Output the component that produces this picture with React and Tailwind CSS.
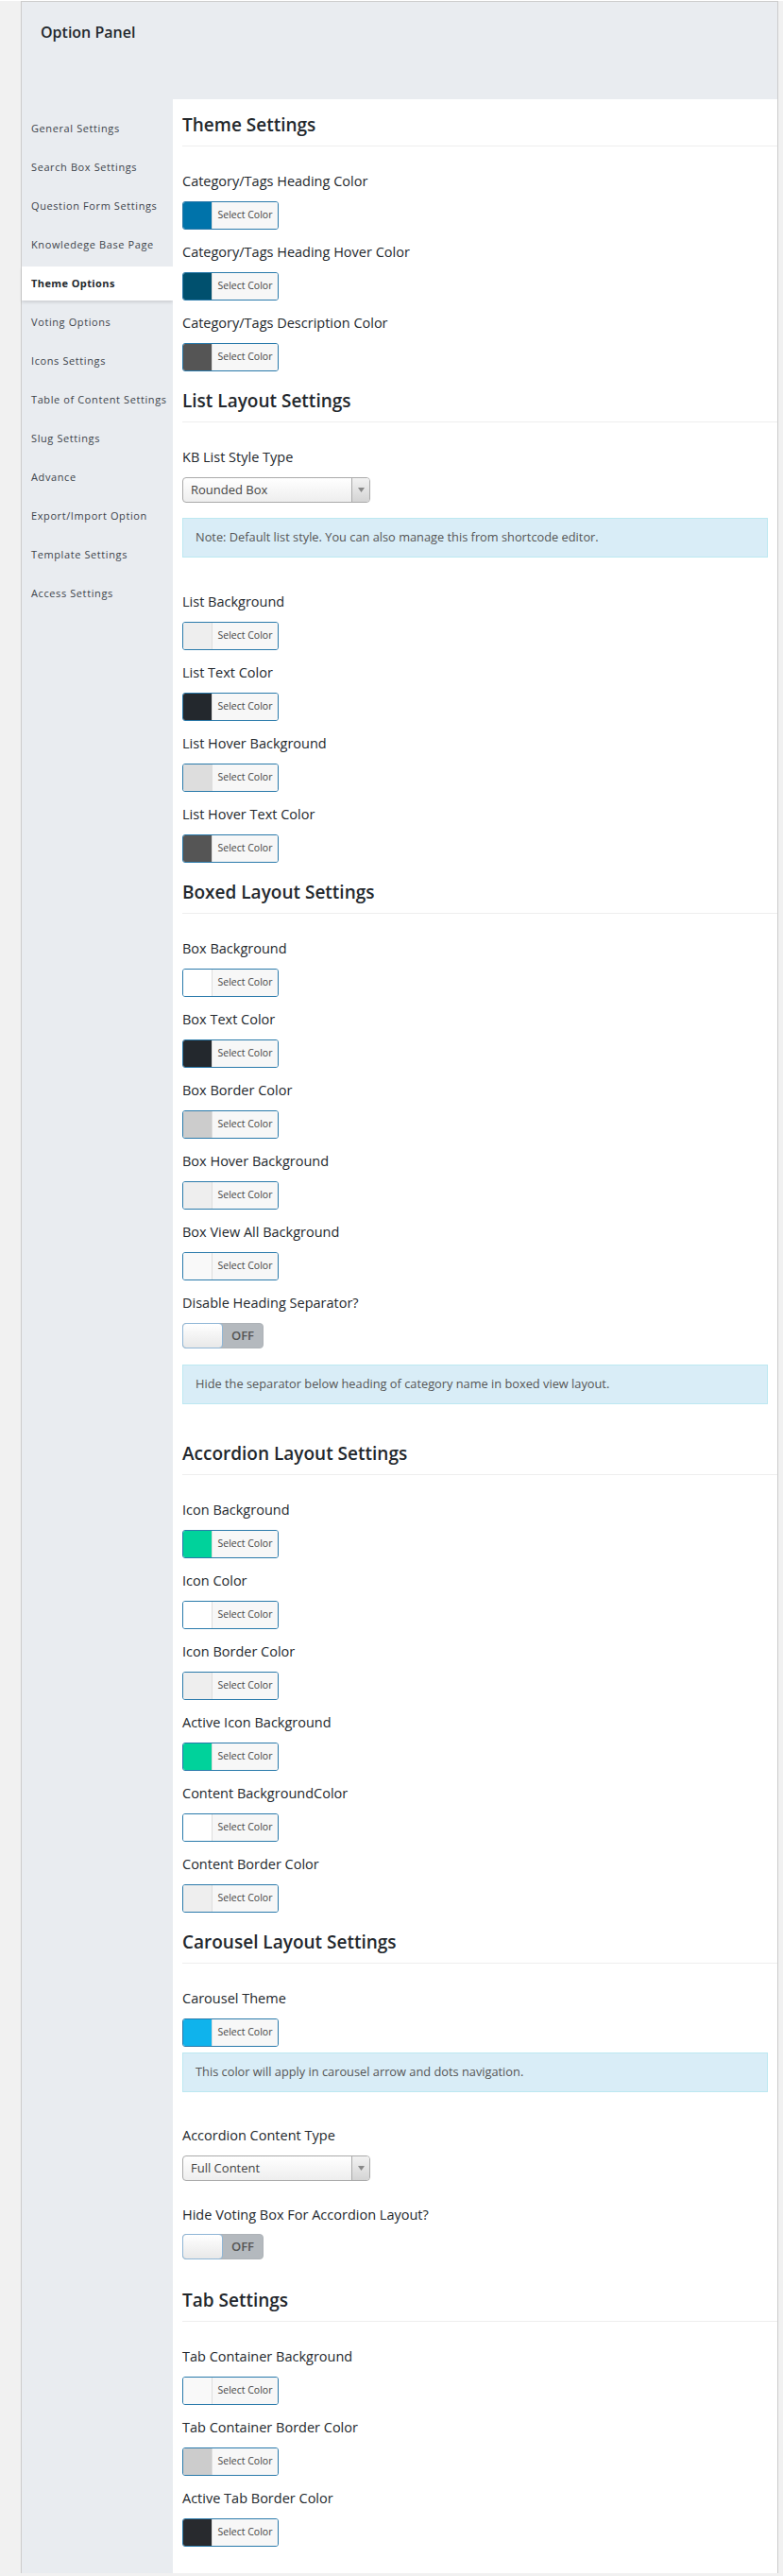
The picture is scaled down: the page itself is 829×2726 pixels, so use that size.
import React from "react";

const sideItems = [
  "General Settings",
  "Search Box Settings",
  "Question Form Settings",
  "Knowledege Base Page",
  "Theme Options",
  "Voting Options",
  "Icons Settings",
  "Table of Content Settings",
  "Slug Settings",
  "Advance",
  "Export/Import Option",
  "Template Settings",
  "Access Settings",
];

function Heading({ children, first }) {
  return (
    <div
      className={`${first ? "pt-[15px]" : "pt-[5px]"} pb-[10px] border-b border-[#eeeeee] mb-[27px]`}
    >
      <h2 className="text-[19px] leading-[24px] font-semibold text-[#23282d]">{children}</h2>
    </div>
  );
}

function Label({ children }) {
  return <div className="text-[14.5px] leading-[20px] text-[#23282d]">{children}</div>;
}

function ColorButton({ swatch }) {
  return (
    <div className="mt-[11px] flex h-[30px] w-[102px] overflow-hidden rounded-[3px] border border-[#2a7aab]">
      <span className={`w-[30px] h-full ${swatch}`} />
      <span className="flex flex-1 items-center justify-center border-l border-[#dddddd] bg-[#f7f7f7] text-[10.5px] text-[#444444]">
        Select Color
      </span>
    </div>
  );
}

function ColorRow({ label, swatch }) {
  return (
    <div className="mb-[14px]">
      <Label>{label}</Label>
      <ColorButton swatch={swatch} />
    </div>
  );
}

function Select({ value }) {
  return (
    <div className="mt-[11px] flex h-[27px] w-[199px] overflow-hidden rounded-[4px] border border-[#aaaaaa] bg-gradient-to-b from-white to-[#eeeeee]">
      <span className="flex-1 pl-[8px] text-[13px] leading-[25px] text-[#444444]">{value}</span>
      <span className="flex w-[19px] items-center justify-center border-l border-[#aaaaaa] bg-gradient-to-b from-[#f2f2f2] to-[#d4d4d4]">
        <svg width="7" height="5" viewBox="0 0 7 5">
          <path d="M0 0 L7 0 L3.5 5 Z" fill="#888888" />
        </svg>
      </span>
    </div>
  );
}

function Toggle({ mt }) {
  return (
    <div className={`${mt} flex h-[27px] w-[86px] rounded-[4px] bg-[#b4b9be] border border-[#aeb3b8]`}>
      <span className="-ml-px -mt-px h-[27px] w-[43px] rounded-[4px] border border-[#8fb6d6] bg-gradient-to-b from-white to-[#e8e8e8]" />
      <span className="flex flex-1 items-center justify-center text-[13px] font-semibold text-[#555555]">
        OFF
      </span>
    </div>
  );
}

function Note({ children, className }) {
  return (
    <div
      className={`mr-[10px] flex h-[42px] items-center border border-[#bce8f1] bg-[#d9edf7] px-[13px] text-[12.8px] text-[#555555] ${className}`}
    >
      {children}
    </div>
  );
}

export default function App() {
  return (
    <div className="min-h-[2726px] bg-[#f1f1f1] font-['Open_Sans',sans-serif]">
      <div className="ml-[22px] mt-[1px] w-[802px] border-x border-t border-[#cccccc] bg-[#e9ecf0]">
        <div className="h-[103px] pl-[20px] pt-[20px]">
          <h1 className="text-[16px] leading-[24px] font-semibold text-[#23282d]">Option Panel</h1>
        </div>
        <div className="flex">
          <nav className="w-[160px] shrink-0 pt-[13px]">
            {sideItems.map((item) =>
              item === "Theme Options" ? (
                <div
                  key={item}
                  className="mb-[5px] flex h-[36px] items-center bg-white pl-[10px] text-[11px] tracking-[0.4px] font-bold text-[#23282d] shadow-[0_2px_3px_rgba(0,0,0,0.12)]"
                >
                  {item}
                </div>
              ) : (
                <div
                  key={item}
                  className="mb-[5px] flex h-[36px] items-center pl-[10px] text-[11px] tracking-[0.6px] text-[#3c434a]"
                >
                  {item}
                </div>
              )
            )}
          </nav>
          <main className="flex-1 bg-white pl-[10px] pb-[14px]">
            <Heading first>Theme Settings</Heading>
            <ColorRow label="Category/Tags Heading Color" swatch="bg-[#0073aa]" />
            <ColorRow label="Category/Tags Heading Hover Color" swatch="bg-[#00506e]" />
            <ColorRow label="Category/Tags Description Color" swatch="bg-[#555555]" />

            <Heading>List Layout Settings</Heading>
            <div>
              <Label>KB List Style Type</Label>
              <Select value="Rounded Box" />
              <Note className="mt-[16px] mb-[37px]">
                Note: Default list style. You can also manage this from shortcode editor.
              </Note>
            </div>
            <ColorRow label="List Background" swatch="bg-[#eeeeee]" />
            <ColorRow label="List Text Color" swatch="bg-[#23282d]" />
            <ColorRow label="List Hover Background" swatch="bg-[#dddddd]" />
            <ColorRow label="List Hover Text Color" swatch="bg-[#555555]" />

            <Heading>Boxed Layout Settings</Heading>
            <ColorRow label="Box Background" swatch="bg-[#ffffff]" />
            <ColorRow label="Box Text Color" swatch="bg-[#23282d]" />
            <ColorRow label="Box Border Color" swatch="bg-[#cccccc]" />
            <ColorRow label="Box Hover Background" swatch="bg-[#eeeeee]" />
            <ColorRow label="Box View All Background" swatch="bg-[#f9f9f9]" />
            <div>
              <Label>Disable Heading Separator?</Label>
              <Toggle mt="mt-[11px]" />
              <Note className="mt-[17px] mb-[35px]">
                Hide the separator below heading of category name in boxed view layout.
              </Note>
            </div>

            <Heading>Accordion Layout Settings</Heading>
            <ColorRow label="Icon Background" swatch="bg-[#00d29b]" />
            <ColorRow label="Icon Color" swatch="bg-[#ffffff]" />
            <ColorRow label="Icon Border Color" swatch="bg-[#eeeeee]" />
            <ColorRow label="Active Icon Background" swatch="bg-[#00d29b]" />
            <ColorRow label="Content BackgroundColor" swatch="bg-[#ffffff]" />
            <ColorRow label="Content Border Color" swatch="bg-[#eeeeee]" />

            <Heading>Carousel Layout Settings</Heading>
            <div>
              <Label>Carousel Theme</Label>
              <ColorButton swatch="bg-[#0fb3ec]" />
              <Note className="mt-[6px] mb-[36px]">
                This color will apply in carousel arrow and dots navigation.
              </Note>
            </div>
            <div className="mb-[26px]">
              <Label>Accordion Content Type</Label>
              <Select value="Full Content" />
            </div>
            <div className="mb-[26px]">
              <Label>Hide Voting Box For Accordion Layout?</Label>
              <Toggle mt="mt-[10px]" />
            </div>

            <Heading>Tab Settings</Heading>
            <ColorRow label="Tab Container Background" swatch="bg-[#f9f9f9]" />
            <ColorRow label="Tab Container Border Color" swatch="bg-[#cccccc]" />
            <ColorRow label="Active Tab Border Color" swatch="bg-[#282a2e]" />
          </main>
        </div>
      </div>
    </div>
  );
}
